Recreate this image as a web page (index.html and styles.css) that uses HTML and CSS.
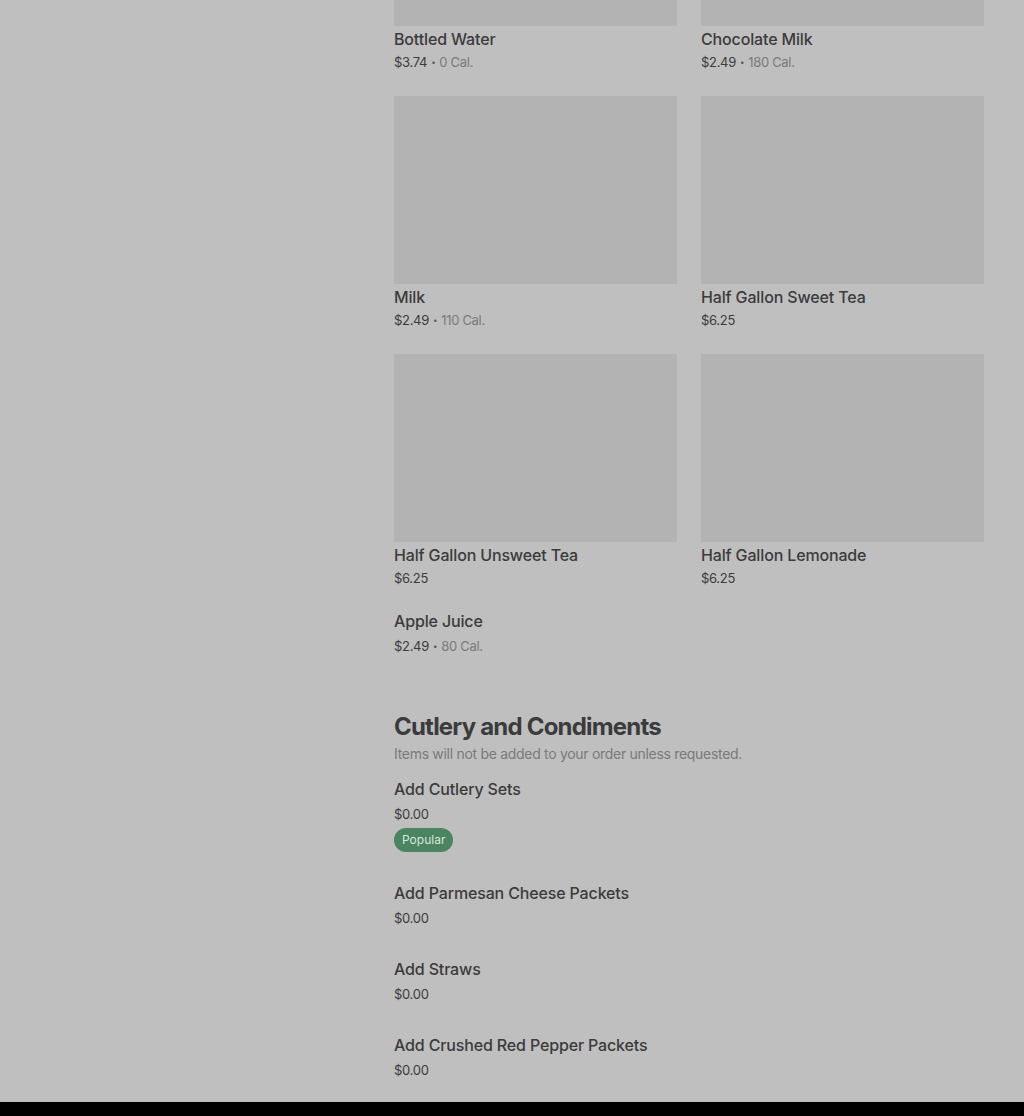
FILE: index.html
```html
<!DOCTYPE html>
<html lang="en">
<head>
<meta charset="utf-8">
<title>Menu</title>
<link rel="stylesheet" href="styles.css">
</head>
<body>
<div class="page">
  <aside class="sidebar"></aside>
  <main class="menu">
    <ul class="grid">
      <li class="card">
        <div class="thumb"></div>
        <div class="name">Bottled Water</div>
        <div class="meta"><span class="price">$3.74</span><span class="dot">•</span><span class="cal">0 Cal.</span></div>
      </li>
      <li class="card">
        <div class="thumb"></div>
        <div class="name">Chocolate Milk</div>
        <div class="meta"><span class="price">$2.49</span><span class="dot">•</span><span class="cal">180 Cal.</span></div>
      </li>
      <li class="card">
        <div class="thumb"></div>
        <div class="name">Milk</div>
        <div class="meta"><span class="price">$2.49</span><span class="dot">•</span><span class="cal">110 Cal.</span></div>
      </li>
      <li class="card">
        <div class="thumb"></div>
        <div class="name">Half Gallon Sweet Tea</div>
        <div class="meta"><span class="price">$6.25</span></div>
      </li>
      <li class="card">
        <div class="thumb"></div>
        <div class="name">Half Gallon Unsweet Tea</div>
        <div class="meta"><span class="price">$6.25</span></div>
      </li>
      <li class="card">
        <div class="thumb"></div>
        <div class="name">Half Gallon Lemonade</div>
        <div class="meta"><span class="price">$6.25</span></div>
      </li>
      <li class="card plain">
        <div class="name">Apple Juice</div>
        <div class="meta"><span class="price">$2.49</span><span class="dot">•</span><span class="cal">80 Cal.</span></div>
      </li>
    </ul>

    <section class="section">
      <h2 class="section-title">Cutlery and Condiments</h2>
      <p class="section-sub">Items will not be added to your order unless requested.</p>
      <ul class="list">
        <li class="row">
          <div class="name">Add Cutlery Sets</div>
          <div class="meta"><span class="price">$0.00</span></div>
          <span class="badge">Popular</span>
        </li>
        <li class="row">
          <div class="name">Add Parmesan Cheese Packets</div>
          <div class="meta"><span class="price">$0.00</span></div>
        </li>
        <li class="row">
          <div class="name">Add Straws</div>
          <div class="meta"><span class="price">$0.00</span></div>
        </li>
        <li class="row">
          <div class="name">Add Crushed Red Pepper Packets</div>
          <div class="meta"><span class="price">$0.00</span></div>
        </li>
      </ul>
    </section>
  </main>
</div>
<footer class="footer"></footer>
</body>
</html>
```

FILE: styles.css
```css
* { box-sizing: border-box; }
html, body { margin: 0; padding: 0; }
body {
  background: #bfbfbf;
  font-family: Inter, "Noto Sans", "Liberation Sans", sans-serif;
  color: #3b3b3b;
  height: 1116px;
  overflow: hidden;
  display: flex;
  flex-direction: column;
}
.page {
  display: flex;
  flex: 1;
}
.sidebar { width: 394px; flex: none; }
.menu {
  width: 590px;
  margin-top: -162px;
}
ul { list-style: none; margin: 0; padding: 0; }
.grid {
  display: grid;
  grid-template-columns: 283px 283px;
  column-gap: 24px;
  row-gap: 24px;
}
.thumb {
  height: 188px;
  background: #b3b3b3;
  margin-bottom: 1px;
}
.card.plain { margin-top: -3px; }
.name {
  font-size: 16px;
  font-weight: 500;
  line-height: 24px;
  letter-spacing: -0.15px;
  color: #3b3b3b;
}
.meta {
  font-size: 13px;
  line-height: 20px;
  color: #3b3b3b;
  letter-spacing: -0.3px;
}
.dot {
  font-size: 8px;
  margin: 0 4px;
  vertical-align: 2px;
  color: #5a5a5a;
}
.card .meta { margin-top: 1px; }
.card.plain .meta { margin-top: 3px; }
.price { color: #3b3b3b; }
.cal { color: #7a7a7a; }
.section { margin-top: 55px; }
.section-title {
  margin: 0;
  font-size: 24px;
  font-weight: 700;
  line-height: 32px;
  letter-spacing: -0.8px;
  color: #3b3b3b;
}
.section-sub {
  margin: 1px 0 0;
  font-size: 14px;
  line-height: 20px;
  letter-spacing: -0.3px;
  color: #7a7a7a;
}
.list {
  margin-top: 13px;
  display: flex;
  flex-direction: column;
  gap: 29px;
}
.row .meta { margin-top: 3px; }
.badge {
  display: inline-block;
  margin-top: 4px;
  height: 24px;
  line-height: 24px;
  padding: 0 8px;
  border-radius: 12px;
  background: #4b8461;
  color: #d8e6dc;
  font-size: 12px;
}
.footer {
  height: 14px;
  background: #000;
  flex: none;
}
```
